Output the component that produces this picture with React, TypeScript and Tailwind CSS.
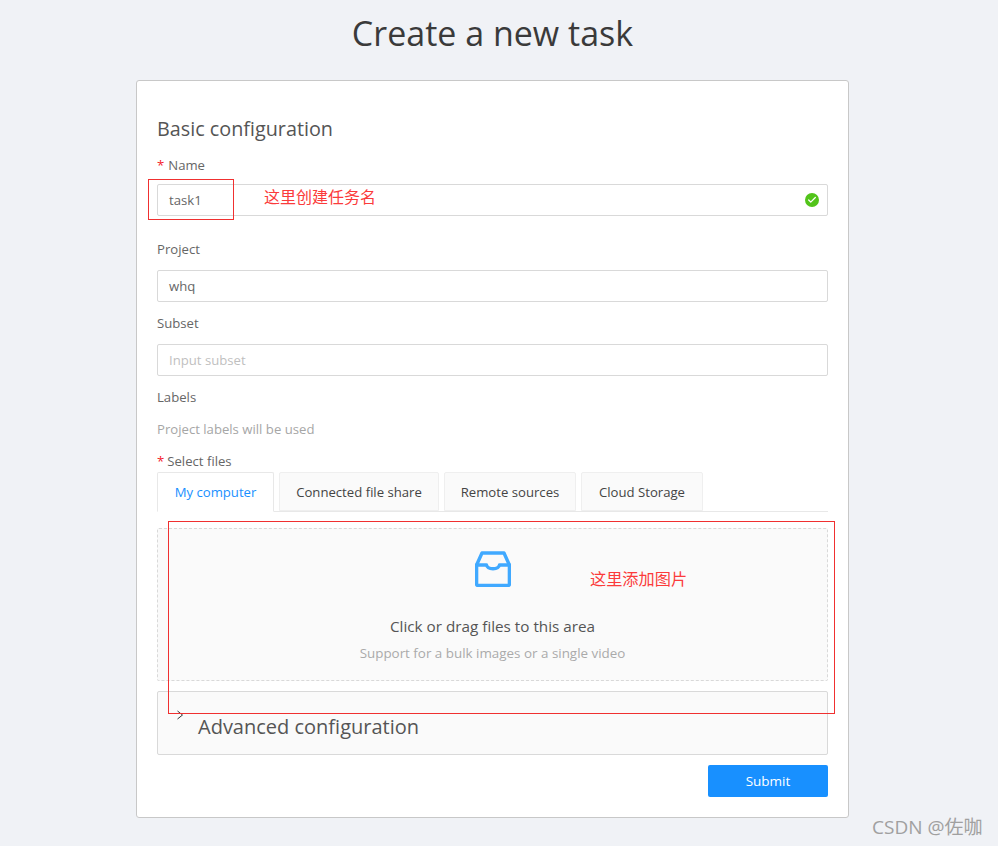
import { Check } from 'lucide-react';

const tabs = [
  { name: 'Connected file share', width: 'w-[160px]' },
  { name: 'Remote sources', width: 'w-[132px]' },
  { name: 'Cloud Storage', width: 'w-[122px]' },
];

function InboxIcon() {
  return (
    <svg viewBox="0 0 36 36" className="w-[36px] h-[36px]" fill="none" stroke="#40a9ff" strokeWidth="3.4" strokeLinejoin="round" strokeLinecap="round">
      <path d="M1.6 14 L7 2 H29 L34.4 14 V33.4 a1 1 0 0 1 -1 1 H2.6 a1 1 0 0 1 -1 -1 Z" />
      <path d="M1.6 14 H11.5 C12.5 19 23.5 19 24.5 14 H34.4" />
    </svg>
  );
}

export default function App() {
  return (
    <div className="relative w-[998px] h-[846px] overflow-hidden bg-[#f0f2f6] font-['Open_Sans','Noto_Sans_CJK_SC',sans-serif] text-[13.15px] text-[#666]">
      <h1 className="h-[80px] pt-[9px] text-center text-[34px] leading-[48px] text-[#3a3a3a] -ml-[13px]">Create a new task</h1>

      {/* Form card */}
      <div className="ml-[136px] w-[713px] h-[738px] bg-white border border-[#c8c8c8] rounded-[3px] px-[20px] pt-[36px]">
        <h2 className="text-[19.8px] leading-[24px] text-[#555]">Basic configuration</h2>

        <label className="block mt-[14px] leading-[20px]"><span className="text-[#f5222d] mr-[4px]">*</span>Name</label>
        <div className="mt-[9px] h-[32px] border border-[#d9d9d9] rounded-[2px] pl-[11px] pr-[8px] flex items-center justify-between text-[#666]">
          <span className="pt-[1px]">task1</span>
          <span className="w-[14px] h-[14px] rounded-full bg-[#52c41a] flex items-center justify-center">
            <Check className="w-[10px] h-[10px] text-white" strokeWidth={3} />
          </span>
        </div>

        <label className="block mt-[23px] leading-[20px]">Project</label>
        <div className="mt-[11px] h-[32px] border border-[#d9d9d9] rounded-[2px] pl-[11px] pt-[1px] flex items-center text-[#666]">whq</div>

        <label className="block mt-[11px] leading-[20px]">Subset</label>
        <div className="mt-[11px] h-[32px] border border-[#d9d9d9] rounded-[2px] pl-[11px] pt-[1px] flex items-center text-[#bfbfbf]">Input subset</div>

        <label className="block mt-[11px] leading-[20px]">Labels</label>
        <p className="mt-[12px] leading-[20px] text-[#a6a6a6]">Project labels will be used</p>
        <label className="block mt-[12px] leading-[20px]"><span className="text-[#f5222d] mr-[3px]">*</span>Select files</label>

        {/* Tabs */}
        <div className="h-[40px] mt-px flex gap-[5px] border-b border-[#e8e8e8]">
          <div className="w-[117px] h-[40px] pt-[1px] bg-white border border-[#e8e8e8] border-b-white rounded-t-[2px] flex items-center justify-center text-[#1890ff]">My computer</div>
          {tabs.map((tab) => (
            <div key={tab.name} className={`${tab.width} h-[39px] pt-[2px] bg-[#fafafa] border border-[#efefef] rounded-t-[2px] flex items-center justify-center text-[#444]`}>{tab.name}</div>
          ))}
        </div>

        {/* Drop zone */}
        <div className="mt-[16px] h-[153px] bg-[#fafafa] border border-dashed border-[#d9d9d9] rounded-[2px] flex flex-col items-center pt-[22px]">
          <InboxIcon />
          <p className="mt-[27px] text-[15.25px] leading-[24px] text-[#555]">Click or drag files to this area</p>
          <p className="mt-[4px] text-[13.4px] leading-[22px] text-[#aaa]">Support for a bulk images or a single video</p>
        </div>

        {/* Advanced configuration */}
        <div className="relative mt-[10px] h-[64px] bg-[#fafafa] border border-[#d9d9d9] rounded-[2px] pl-[40px] pt-[21px] text-[20px] leading-[28px] text-[#555]">
          <svg viewBox="0 0 10 10" className="absolute left-[17px] top-[18px] w-[10px] h-[10px]" fill="none" stroke="#333" strokeWidth="1">
            <path d="M2.5 1 L7.5 5 L2.5 9" />
          </svg>
          Advanced configuration
        </div>

        <div className="mt-[10px] flex justify-end">
          <button className="w-[120px] h-[32px] pt-[1px] bg-[#1890ff] rounded-[2px] text-white text-[13.5px] font-medium">Submit</button>
        </div>
      </div>

      {/* Screenshot annotations */}
      <div className="absolute left-[148px] top-[179px] w-[86px] h-[41px] border border-[#f03030]" />
      <div className="absolute left-[264px] top-[186px] text-[16px] leading-[22px] text-[#fb3b3b]">这里创建任务名</div>
      <div className="absolute left-[168px] top-[521px] w-[667px] h-[193px] border border-[#f03030]" />
      <div className="absolute left-[590px] top-[568px] text-[16.2px] leading-[22px] text-[#fb3b3b]">这里添加图片</div>
      <div className="absolute left-[872px] top-[815px] text-[19px] leading-[24px] text-[#a0a0a0]">CSDN @佐咖</div>
    </div>
  );
}
